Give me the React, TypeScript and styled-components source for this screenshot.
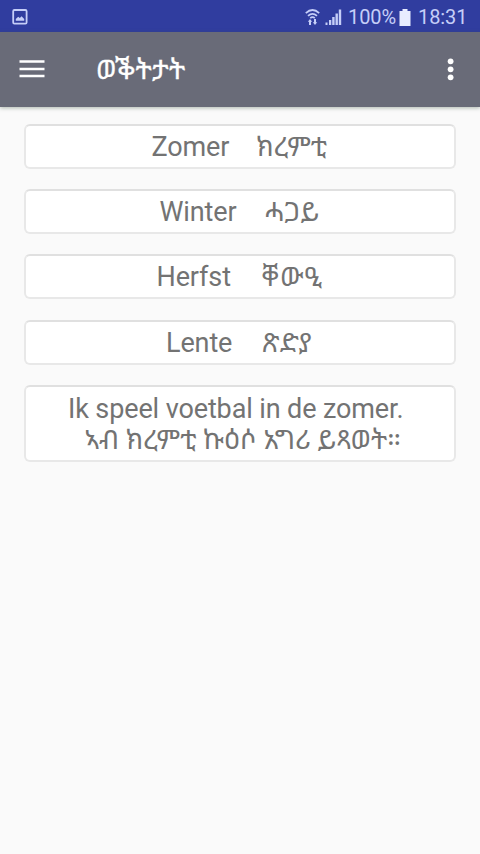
import React from "react";
import styled, { createGlobalStyle } from "styled-components";

const GlobalStyle = createGlobalStyle`
  * { box-sizing: border-box; }
  html, body { margin: 0; background: #fafafa; }
  body { font-family: Roboto, "Noto Sans Ethiopic", "Noto Sans", sans-serif; }
`;

const Screen = styled.div`
  display: flex;
  flex-direction: column;
  width: 480px;
  height: 854px;
  overflow: hidden;
  background: #fafafa;
`;

const StatusBar = styled.header`
  display: flex;
  align-items: center;
  justify-content: space-between;
  flex: none;
  height: 32px;
  padding: 0 14px 0 12px;
  background: #303d9f;
  color: #c5cef8;
  font-size: 20px;
  line-height: 32px;
`;

const StatusGroup = styled.div`
  display: flex;
  align-items: center;
  height: 32px;
  padding-top: 2px;
`;

const StatusText = styled.span<{ $width: number }>`
  width: ${({ $width }) => $width}px;
  white-space: nowrap;
  letter-spacing: -0.1px;
`;

const Icon = styled.svg<{ $gap?: number }>`
  display: block;
  flex: none;
  margin-right: ${({ $gap = 0 }) => $gap}px;
`;

const Toolbar = styled.nav`
  display: flex;
  align-items: center;
  flex: none;
  height: 75px;
  padding: 0 24px 1px 18px;
  background: #696b78;
  color: #fff;
  box-shadow: 0 1px 4px rgba(60, 80, 60, 0.4);
`;

const IconButton = styled.button`
  display: flex;
  padding: 0;
  border: 0;
  background: none;
  color: inherit;
`;

const Title = styled.h1`
  flex: 1;
  margin: 1px 0 0 50px;
  font-size: 27px;
  font-weight: 400;
  line-height: 36px;
  letter-spacing: 0.3px;
  -webkit-text-stroke: 0.3px currentColor;
`;

const CardList = styled.main`
  display: flex;
  flex-direction: column;
  gap: 20.4px;
  padding: 16.5px 24px;
`;

const Card = styled.section<{ $height?: number }>`
  display: flex;
  flex-direction: column;
  justify-content: center;
  height: ${({ $height = 45 }) => $height}px;
  padding-top: 2.4px;
  border: 2px solid #e8e8e8;
  border-top-color: #e0e0e0;
  border-radius: 6px;
  background: #fff;
  color: #737373;
  font-size: 27px;
  line-height: 31px;
`;

const Line = styled.div<{ $indent: number }>`
  display: flex;
  height: 31px;
  padding-left: ${({ $indent }) => $indent}px;
  white-space: nowrap;
`;

const Dutch = styled.span`
  letter-spacing: -0.12px;
`;

const Tigrinya = styled.span<{ $gap?: number; $spacing?: number }>`
  margin-left: ${({ $gap = 0 }) => $gap}px;
  letter-spacing: ${({ $spacing = 0 }) => $spacing}px;
`;

const seasons = [
  { dutch: "Zomer", tigrinya: "ክረምቲ", indent: 125.5, gap: 27, spacing: 0 },
  { dutch: "Winter", tigrinya: "ሓጋይ", indent: 133.5, gap: 27.5, spacing: 0 },
  { dutch: "Herfst", tigrinya: "ቐውዒ", indent: 130.5, gap: 30.5, spacing: 1.2 },
  { dutch: "Lente", tigrinya: "ጽድያ", indent: 140, gap: 30, spacing: 0 },
];

export default function App() {
  return (
    <Screen>
      <GlobalStyle />
      <StatusBar>
        <StatusGroup>
          <Icon width="16" height="16" viewBox="0 0 16 16">
            <rect x="1.2" y="1" width="13.4" height="13.6" rx="1.2" fill="none" stroke="currentColor" strokeWidth="1.8" />
            <path d="M3.8 11.8V10l2.4-2.3 1.6 1.2 1.8-1.6 2.6 2.7v1.8z" fill="currentColor" />
          </Icon>
        </StatusGroup>
        <StatusGroup>
          <Icon width="15" height="18" viewBox="0 0 15 18" $gap={5}>
            <path
              d="M0.800 5.200q6.700-6.400 13.400 0M3 7.800q4.500-4 9 0M5.200 10.200q2.300-2 4.600 0"
              fill="none"
              stroke="currentColor"
              strokeWidth="1.700"
            />
            <path d="M5 11l2.200 2.800H6V17H4v-3.200H2.800zM10 17l-2.200-2.800H9V11h2v3.200h1.200z" fill="currentColor" />
          </Icon>
          <Icon width="17" height="16" viewBox="0 0 17 16" $gap={6}>
            <path d="M0.500 13.500h2V16h-2zM4 11h2.300v5H4zM7.200 8h2.400v8H7.200zM10.500 4.500h2.400V16h-2.400zM13.800 0.500h2.400V16h-2.400z" fill="currentColor" />
          </Icon>
          <StatusText $width={51}>100%</StatusText>
          <Icon width="12" height="17" viewBox="0 0 12 17" $gap={7}>
            <path d="M3.500 0h5v2H11.500v15H0.500V2h3z" fill="#e8edff" />
          </Icon>
          <StatusText $width={48}>18:31</StatusText>
        </StatusGroup>
      </StatusBar>
      <Toolbar>
        <IconButton aria-label="Menu">
          <Icon width="28" height="20" viewBox="0 0 28 20">
            <path d="M1.500 2.500h25M1.500 10h25M1.500 17h25" stroke="currentColor" strokeWidth="2.700" />
          </Icon>
        </IconButton>
        <Title>ወቕትታት</Title>
        <IconButton aria-label="Meer">
          <Icon width="10" height="24" viewBox="0 0 10 24">
            <circle cx="4.600" cy="4.300" r="2.900" fill="currentColor" />
            <circle cx="4.600" cy="12.300" r="2.900" fill="currentColor" />
            <circle cx="4.600" cy="20.300" r="2.900" fill="currentColor" />
          </Icon>
        </IconButton>
      </Toolbar>
      <CardList>
        {seasons.map(({ dutch, tigrinya, indent, gap, spacing }) => (
          <Card key={dutch}>
            <Line $indent={indent}>
              <Dutch>{dutch}</Dutch>
              <Tigrinya $gap={gap} $spacing={spacing}>{tigrinya}</Tigrinya>
            </Line>
          </Card>
        ))}
        <Card $height={77}>
          <Line $indent={42}>
            <Dutch>Ik speel voetbal in de zomer.</Dutch>
          </Line>
          <Line $indent={58.5}>
            <Tigrinya>ኣብ ክረምቲ ኩዕሶ አግሪ ይጻወት።</Tigrinya>
          </Line>
        </Card>
      </CardList>
    </Screen>
  );
}
